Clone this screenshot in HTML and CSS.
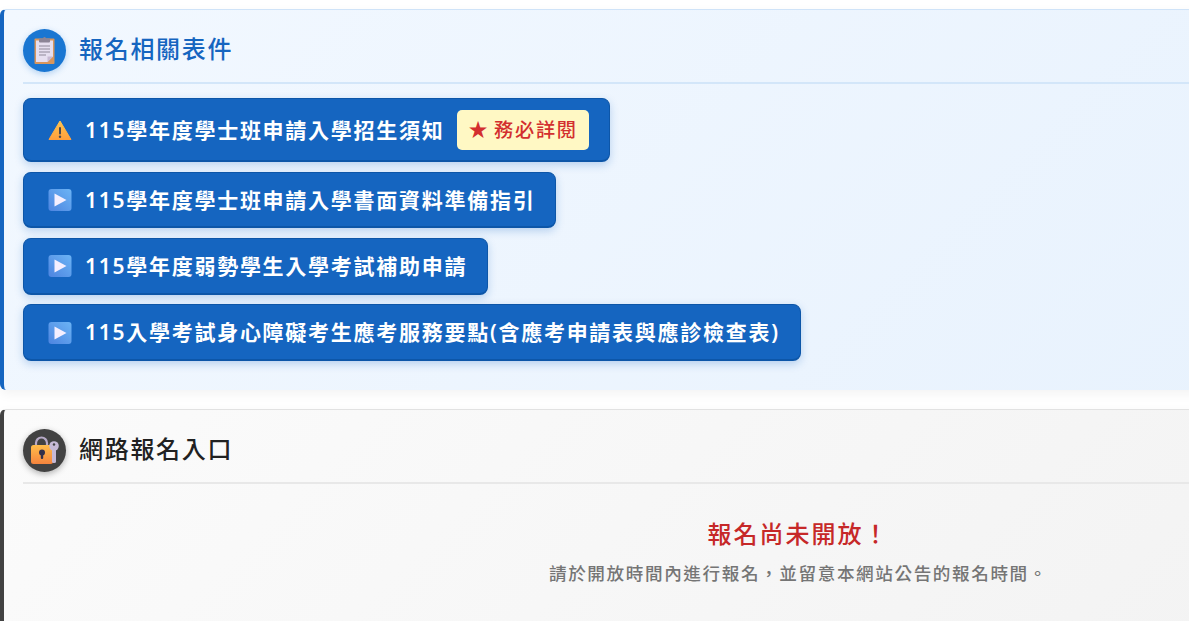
FILE: index.html
```html
<!DOCTYPE html>
<html lang="zh-Hant">
  <head>
    <meta charset="UTF-8" />
    <title>報名相關表件</title>
    <link rel="stylesheet" href="styles.css">
  </head>
  <body>
    <section class="card card-blue">
      <div class="card-head">
        <span class="head-icon">
          <svg viewBox="0 0 21 27" width="21" height="27">
            <rect x="0.5" y="1.500" width="20" height="25.500" rx="1" fill="#d8965c"/>
            <path d="M2 3.500h17v16l-5.500 5.500H2z" fill="#e6dff0"/>
            <path d="M19 19.500l-5.500 5.500v-5.500z" fill="#c7b9d2"/>
            <rect x="5" y="1.500" width="11" height="4" rx="1" fill="#8c8496"/>
            <rect x="9" y="0" width="3" height="3" rx="1.500" fill="#8c8496"/>
            <path d="M5 9h11M5 12h11M5 15h11M5 18h7" stroke="#8f8a99" stroke-width="1.100"/>
          </svg>
        </span>
        <h2 class="head-title">報名相關表件</h2>
      </div>
      <div class="link-list">
        <a class="link-btn" href="#">
          <svg class="btn-icon" viewBox="0 0 24 24">
            <defs>
              <linearGradient id="warnfill" x1="0" y1="0" x2="0" y2="1">
                <stop offset="0" stop-color="#ffc44f"/>
                <stop offset="1" stop-color="#ff9f3c"/>
              </linearGradient>
              <linearGradient id="playfill" x1="1" y1="0" x2="0" y2="1">
                <stop offset="0" stop-color="#6cb4f5"/>
                <stop offset="1" stop-color="#4d84e0"/>
              </linearGradient>
            </defs>
            <path d="M12 3L23 21.500H1z" fill="url(#warnfill)" stroke="url(#warnfill)" stroke-linejoin="round"/>
            <rect x="11" y="9" width="2" height="7.500" rx="1" fill="#4a4a52"/>
            <circle cx="12" cy="18.800" r="1.200" fill="#4a4a52"/>
          </svg>
          <span>115學年度學士班申請入學招生須知</span>
          <span class="must-read">★ 務必詳閱</span>
        </a>
        <a class="link-btn" href="#">
          <svg class="btn-icon" viewBox="0 0 24 24">
            <rect x="0.500" y="1" width="23" height="22" rx="3" fill="url(#playfill)"/>
            <path d="M6.500 5.500l12 6.500-12 6.500z" fill="#f5efff"/>
          </svg>
          <span>115學年度學士班申請入學書面資料準備指引</span>
        </a>
        <a class="link-btn" href="#">
          <svg class="btn-icon" viewBox="0 0 24 24">
            <rect x="0.500" y="1" width="23" height="22" rx="3" fill="url(#playfill)"/>
            <path d="M6.500 5.500l12 6.500-12 6.500z" fill="#f5efff"/>
          </svg>
          <span>115學年度弱勢學生入學考試補助申請</span>
        </a>
        <a class="link-btn" href="#">
          <svg class="btn-icon" viewBox="0 0 24 24">
            <rect x="0.500" y="1" width="23" height="22" rx="3" fill="url(#playfill)"/>
            <path d="M6.500 5.500l12 6.500-12 6.500z" fill="#f5efff"/>
          </svg>
          <span>115入學考試身心障礙考生應考服務要點(含應考申請表與應診檢查表)</span>
        </a>
      </div>
    </section>

    <section class="card card-gray">
      <div class="card-head">
        <span class="head-icon">
          <svg viewBox="0 0 28 28" width="28" height="28">
            <defs>
              <linearGradient id="lockfill" x1="0" y1="0" x2="0" y2="1">
                <stop offset="0" stop-color="#ffbd4a"/>
                <stop offset="1" stop-color="#f5843e"/>
              </linearGradient>
            </defs>
            <path d="M5 10V7a5.500 5.500 0 0 1 11 0v3" fill="none" stroke="#b6a9c6" stroke-width="2.200"/>
            <rect x="0" y="9" width="22" height="19" rx="2.500" fill="url(#lockfill)"/>
            <circle cx="11" cy="16.500" r="3" fill="#33304a"/>
            <rect x="9.800" y="16.500" width="2.400" height="6.500" rx="1" fill="#33304a"/>
            <circle cx="23" cy="10" r="4.800" fill="#c6b9d6"/>
            <rect x="21" y="12" width="4" height="15" rx="1.500" fill="#c6b9d6"/>
            <circle cx="23" cy="8.500" r="1.200" fill="#424242"/>
          </svg>
        </span>
        <h2 class="head-title">網路報名入口</h2>
      </div>
      <div class="closed-msg">
        <div class="closed-title">報名尚未開放！</div>
        <div class="closed-text">請於開放時間內進行報名，並留意本網站公告的報名時間。</div>
      </div>
    </section>
  </body>
</html>
```

FILE: styles.css
```css
html,
body {
  margin: 0;
  padding: 0;
  height: 621px;
  overflow: hidden;
  background: #fff;
}
body {
  width: 1592px;
  padding-top: 9px;
  font-family: "Noto Sans", "Noto Sans CJK TC", sans-serif;
}
.card {
  padding: 19px 18px 29px 19px;
  border-top: 1px solid #e2e2e2;
  border-left: 4px solid #424242;
  border-radius: 6px;
  margin-bottom: 19px;
  box-shadow: 0 4px 12px rgba(0, 0, 0, 0.05);
}
.card-blue {
  background: linear-gradient(135deg, #f2f8ff, #e6f1fd);
  border-top-color: #cfe3f8;
  border-left-color: #1565c0;
}
.card-gray {
  background: linear-gradient(135deg, #fbfbfb, #f1f1f1);
  padding-bottom: 60px;
}
.card-head {
  display: flex;
  align-items: center;
  gap: 13px;
  padding-bottom: 10px;
  border-bottom: 2px solid #d3e6f9;
  margin-bottom: 14px;
}
.card-gray .card-head {
  border-bottom-color: #e8e8e8;
}
.head-icon {
  display: flex;
  align-items: center;
  justify-content: center;
  width: 43px;
  height: 43px;
  border-radius: 50%;
  background: #1976d2;
  box-shadow: 0 2px 6px rgba(25, 118, 210, 0.3);
}
.card-gray .head-icon {
  background: #424242;
  box-shadow: 0 2px 6px rgba(0, 0, 0, 0.3);
}
.head-title {
  margin: 0;
  padding-bottom: 3px;
  font-size: 24px;
  line-height: 32px;
  font-weight: 500;
  letter-spacing: 1.700px;
  color: #1565c0;
}
.card-gray .head-title {
  color: #212121;
}
.link-list {
  display: flex;
  flex-direction: column;
  align-items: flex-start;
  gap: 9.800px;
}
.link-btn {
  display: flex;
  align-items: center;
  gap: 13px;
  padding: 11px 20px 10px 24px;
  border: 1px solid #0d56a8;
  border-bottom-width: 2px;
  border-radius: 8px;
  background: #1565c0;
  color: #fff;
  font-size: 21px;
  line-height: 32.500px;
  font-weight: 600;
  letter-spacing: 1.730px;
  text-decoration: none;
  box-shadow: 0 3px 8px rgba(21, 101, 192, 0.25);
}
.btn-icon {
  width: 24px;
  height: 24px;
  flex: none;
}
.must-read {
  padding: 4px 11px;
  border-radius: 5px;
  background: #fff8c4;
  color: #d32f2f;
  font-size: 19.200px;
  line-height: 32px;
  font-weight: 500;
  word-spacing: -2px;
}
.closed-msg {
  padding-top: 18px;
  text-align: center;
}
.closed-title {
  font-size: 24px;
  line-height: 36px;
  font-weight: 500;
  letter-spacing: 2px;
  color: #c62828;
}
.closed-text {
  margin-top: 7px;
  font-size: 17.600px;
  line-height: 28px;
  font-weight: 500;
  letter-spacing: 1.600px;
  color: #757575;
}
```
